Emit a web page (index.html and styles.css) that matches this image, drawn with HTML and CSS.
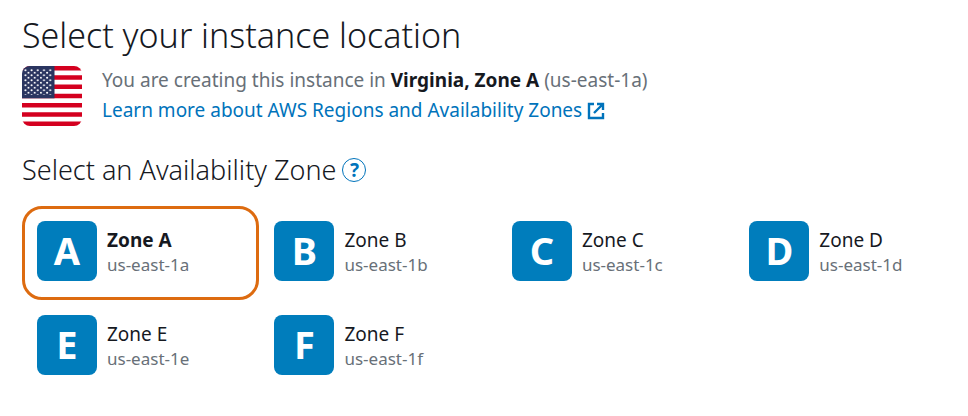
FILE: index.html
```html
<!DOCTYPE html>
<html lang="en">
<head>
<meta charset="utf-8">
<title>Select your instance location</title>
<link rel="stylesheet" href="styles.css">
</head>
<body>
<main class="page">
  <h1 class="title">Select your instance location</h1>
  <section class="location">
    <svg class="flag" viewBox="0 0 60 60" role="img" aria-label="United States">
      <defs>
        <clipPath id="round"><rect width="60" height="60" rx="8"/></clipPath>
        <pattern id="stars" x="2" y="3" width="6.2" height="5" patternUnits="userSpaceOnUse">
          <circle cx="1.4" cy="1.3" r="1" fill="#fff"/><circle cx="4.5" cy="3.8" r="1" fill="#fff"/>
        </pattern>
      </defs>
      <g clip-path="url(#round)">
        <rect width="60" height="60" fill="#fff"/>
        <path d="M0 2.3h60M0 11.5h60M0 20.8h60M0 30h60M0 39.2h60M0 48.5h60M0 57.7h60" stroke="#d4001f" stroke-width="4.6"/>
        <rect width="32.5" height="32.3" fill="#2a3560"/>
        <rect x="2" y="3" width="28" height="26" fill="url(#stars)"/>
      </g>
    </svg>
    <div class="summary">
      <p class="line">You are creating this instance in <strong>Virginia, Zone A</strong> (us-east-1a)</p>
      <a class="learn" href="#">Learn more about AWS Regions and Availability Zones
        <svg class="external" viewBox="0 0 16 16" aria-hidden="true"><path d="M6 1H1v14h14v-5M9 1h6v6M15 1L6 10"/></svg></a>
    </div>
  </section>
  <div class="subhead">
    <h2 class="subtitle">Select an Availability Zone</h2>
    <button class="help" type="button" aria-label="Help">?</button>
  </div>
  <div class="zones">
    <button type="button" class="zone selected" aria-pressed="true"><span class="tile">A</span><span class="label"><span class="name">Zone A</span><span class="code">us-east-1a</span></span></button>
    <button type="button" class="zone"><span class="tile">B</span><span class="label"><span class="name">Zone B</span><span class="code">us-east-1b</span></span></button>
    <button type="button" class="zone"><span class="tile">C</span><span class="label"><span class="name">Zone C</span><span class="code">us-east-1c</span></span></button>
    <button type="button" class="zone"><span class="tile">D</span><span class="label"><span class="name">Zone D</span><span class="code">us-east-1d</span></span></button>
    <button type="button" class="zone"><span class="tile">E</span><span class="label"><span class="name">Zone E</span><span class="code">us-east-1e</span></span></button>
    <button type="button" class="zone"><span class="tile">F</span><span class="label"><span class="name">Zone F</span><span class="code">us-east-1f</span></span></button>
  </div>
</main>
</body>
</html>
```
FILE: styles.css
```css
* { box-sizing: border-box; }
body { margin: 0; background: #fff; color: #16191f; font-family: "Noto Sans", "Open Sans", sans-serif; font-size: 19px; }
.page { padding: 10px 0 0 22px; }
.title, .subtitle, .line { margin: 0; }
.title { font-size: 34px; line-height: 50px; font-weight: 300; }
.location { display: flex; gap: 20px; margin-top: 6px; }
.flag { width: 60px; height: 60px; }
.line, .learn { line-height: 30px; display: block; }
.line { color: #687078; margin-top: -1px; }
.line strong { color: #16191f; }
.learn { color: #0073bb; text-decoration: none; }
.external { width: 16px; height: 16px; margin-left: 1px; vertical-align: -2px; overflow: visible; fill: none; stroke: currentColor; stroke-width: 2.4; }
.subhead { display: flex; align-items: center; gap: 6px; margin-top: 24px; }
.subtitle { font-size: 27px; line-height: 40px; font-weight: 300; }
.help { width: 24px; height: 24px; padding: 0; border: 1px solid #0073bb; border-radius: 50%; background: none; color: #0073bb; font: bold 19px/22px "Noto Sans", sans-serif; }
.zones { display: grid; grid-template-columns: repeat(3, 25.1%) 1fr; margin-top: 16px; }
.zone { display: flex; align-items: flex-start; gap: 10px; height: 94px; padding: 12px; border: 3px solid transparent; border-radius: 20px; background: none; font: inherit; color: inherit; text-align: left; }
.selected { border-color: #dd6b10; }
.selected .name { font-weight: 700; }
.tile { width: 60px; height: 60px; border-radius: 8px; background: #007dbc; color: #fff; font-size: 38px; line-height: 58px; font-weight: 700; text-align: center; }
.label { padding-top: 7px; }
.name, .code { display: block; line-height: 25px; }
.code { color: #687078; font-size: 17px; line-height: 24px; }
```
